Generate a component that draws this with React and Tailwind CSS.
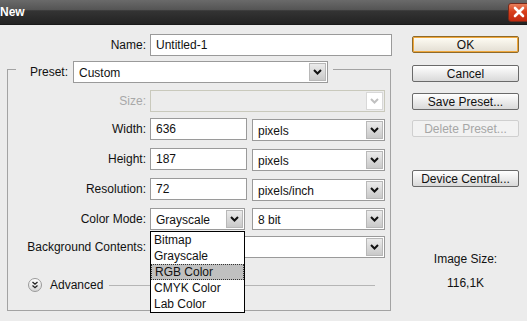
import React from "react";

function Chevron({ disabled }) {
  return (
    <svg width="9" height="6" viewBox="0 0 9 6">
      <path d="M1 1 L4.5 4.5 L8 1" fill="none" stroke={disabled ? "#c0c0c0" : "#111"} strokeWidth="2" />
    </svg>
  );
}

function Select({ w, value, disabled }) {
  return (
    <div
      className={`flex h-[22px] items-stretch border ${
        disabled ? "border-[#c9c9bc] bg-[#ececec]" : "border-[#9a9a9a] bg-white"
      }`}
      style={{ width: w }}
    >
      <div className="flex flex-1 items-center pl-[5px] pt-[2px]">{value}</div>
      <div
        className={`m-[1px] flex w-[17px] items-center justify-center border ${
          disabled
            ? "border-[#d8d8d8] bg-white"
            : "border-[#b8b8b8] bg-[linear-gradient(#ebebeb,#c9c9c9)]"
        }`}
      >
        <Chevron disabled={disabled} />
      </div>
    </div>
  );
}

function Input({ w, value }) {
  return (
    <div
      className="flex h-[22px] items-center border border-[#9a9a9a] bg-white pl-[5px]"
      style={{ width: w }}
    >
      {value}
    </div>
  );
}

function Label({ children, w, disabled }) {
  return (
    <div
      className={`pr-[4px] text-right ${disabled ? "text-[#a8a8a8]" : ""}`}
      style={{ width: w }}
    >
      {children}
    </div>
  );
}

function Button({ children, ok, disabled, mt }) {
  return (
    <div
      className={`flex h-[17px] w-[107px] items-center justify-center rounded-[2px] border ${
        ok
          ? "border-[#8f6a2a] bg-[linear-gradient(#fffdf4,#e2ddd2)] shadow-[inset_0_0_0_1px_#f0a83c]"
          : disabled
          ? "border-[#cfcfcf] bg-[#f2f2f2] text-[#a6a6a6]"
          : "border-[#6a6a6a] bg-[linear-gradient(#ffffff,#d9d9d9)]"
      }`}
      style={{ marginTop: mt }}
    >
      {children}
    </div>
  );
}

export default function App() {
  return (
    <div className="relative h-[321px] w-[527px] overflow-hidden bg-[#ececec] font-['Liberation_Sans',Arial,sans-serif] text-[12px] leading-none text-[#111]">
      {/* Title bar */}
      <div className="flex h-[25px] items-center justify-between border-b border-[#1a1a1a] bg-[linear-gradient(#6a6a6a,#555_40%,#343434_45%,#232323)]">
        <div className="pl-0 text-[12px] font-bold text-white">New</div>
        <div className="mr-[-3px] flex h-[19px] w-[22px] items-center justify-center rounded-[3px] border border-[#7a2a1a] bg-[linear-gradient(#e8805c,#d8401c_45%,#c02a10)]">
          <svg width="12" height="12" viewBox="0 0 12 12">
            <path d="M2 2 L10 10 M10 2 L2 10" stroke="#fff" strokeWidth="2.6" strokeLinecap="round" />
          </svg>
        </div>
      </div>

      <div className="flex">
        {/* Left column */}
        <div className="w-[395px] pt-[9px]">
          <div className="flex h-[22px] items-center">
            <Label w="150px">Name:</Label>
            <Input w="242px" value="Untitled-1" />
          </div>

          {/* Fieldset */}
          <div className="ml-[7px] mt-[5px] w-[384px]">
            <div className="flex h-[22px]">
              <div className="mt-[8px] w-[9px] border-l border-t border-[#a3a3a3]" />
              <div className="flex w-[57px] items-center justify-end pr-[5px]">Preset:</div>
              <Select w="255px" value="Custom" />
              <div className="ml-[5px] mt-[8px] flex-1 border-r border-t border-[#a3a3a3]" />
            </div>
            <div className="h-[228px] border-b border-l border-r border-[#a3a3a3] pt-[7px]">
              <div className="flex h-[22px] items-center">
                <Label w="142px" disabled>
                  Size:
                </Label>
                <Select w="235px" value="" disabled />
              </div>
              <div className="mt-[6px] flex h-[22px] items-center">
                <Label w="142px">Width:</Label>
                <Input w="97px" value="636" />
                <div className="ml-[5px] mt-[2px]">
                  <Select w="133px" value="pixels" />
                </div>
              </div>
              <div className="mt-[8px] flex h-[22px] items-center">
                <Label w="142px">Height:</Label>
                <Input w="97px" value="187" />
                <div className="ml-[5px] mt-[2px]">
                  <Select w="133px" value="pixels" />
                </div>
              </div>
              <div className="mt-[8px] flex h-[22px] items-center">
                <Label w="142px">Resolution:</Label>
                <Input w="97px" value="72" />
                <div className="ml-[5px] mt-[2px]">
                  <Select w="133px" value="pixels/inch" />
                </div>
              </div>
              <div className="mt-[8px] flex h-[22px] items-center">
                <Label w="142px">Color Mode:</Label>
                <Select w="95px" value="Grayscale" />
                <div className="ml-[7px]">
                  <Select w="133px" value="8 bit" />
                </div>
              </div>
              <div className="mt-[6px] flex h-[22px] items-center">
                <Label w="142px">Background Contents:</Label>
                <Select w="235px" value="" />
              </div>
              <div className="mt-[20px] flex h-[14px] items-center">
                <div className="ml-[20px] flex h-[14px] w-[14px] items-center justify-center rounded-full border border-[#9a9a9a] bg-[linear-gradient(#ffffff,#d6d6d6)]">
                  <svg width="8" height="8" viewBox="0 0 8 8">
                    <path d="M1.5 1 L4 3.2 L6.5 1 M1.5 4.5 L4 6.7 L6.5 4.5" fill="none" stroke="#222" strokeWidth="1.3" />
                  </svg>
                </div>
                <div className="ml-[8px]">Advanced</div>
                <div className="ml-[6px] w-[266px] border-t border-[#b5b5b5]" />
              </div>
            </div>
          </div>
        </div>

        {/* Right column */}
        <div className="ml-[17px] flex w-[107px] flex-col pt-[11px]">
          <Button ok>OK</Button>
          <Button mt="12px">Cancel</Button>
          <Button mt="11px">Save Preset...</Button>
          <Button mt="10px" disabled>
            Delete Preset...
          </Button>
          <Button mt="33px">Device Central...</Button>
          <div className="mt-[66px] text-center">Image Size:</div>
          <div className="mt-[12px] text-center">116,1K</div>
        </div>
      </div>

      {/* Open dropdown list */}
      <div className="absolute left-[150px] top-[231px] w-[95px] border border-black bg-white">
        {["Bitmap", "Grayscale", "RGB Color", "CMYK Color", "Lab Color"].map((t) => (
          <div
            key={t}
            className={`flex h-[16px] items-center pl-[3px] ${
              t === "RGB Color" ? "border border-dotted border-[#333] bg-[#c0c0c0] pl-[2px]" : ""
            }`}
          >
            {t}
          </div>
        ))}
      </div>
    </div>
  );
}
